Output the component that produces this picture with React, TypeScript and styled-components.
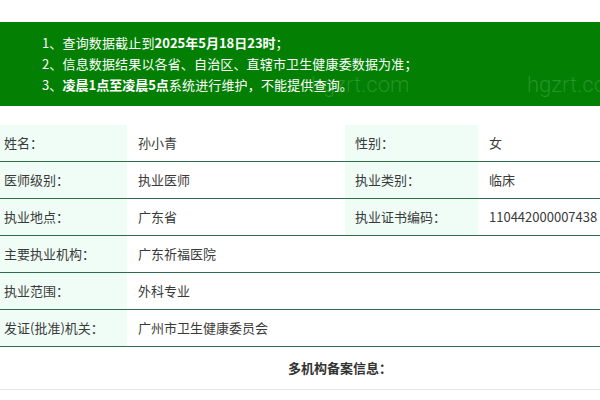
import React from "react";
import styled, { createGlobalStyle } from "styled-components";

const Global = createGlobalStyle`
  html, body { margin: 0; padding: 0; background: #fff; overflow: hidden; }
  body { font-family: "Noto Sans CJK SC", "Noto Sans", sans-serif; font-size: 13px; color: #333; }
`;

const Page = styled.div`
  position: relative;
  width: 600px;
  height: 400px;
  overflow: hidden;
  padding-top: 22px;
  box-sizing: border-box;
`;

const Banner = styled.div`
  position: relative;
  background: #038003;
  color: #fff;
  padding: 10px 0 10px 42px;
  height: 84px;
  box-sizing: border-box;
  overflow: hidden;
`;

const Notice = styled.p`
  margin: 0;
  line-height: 21px;
  font-size: 13px;
  letter-spacing: 0.15px;
  white-space: nowrap;
  position: relative;
  z-index: 1;
`;

const Strong = styled.b`
  font-weight: 700;
  letter-spacing: 0;
`;

const Watermark = styled.span<{ $x: number; $y: number }>`
  position: absolute;
  left: ${(p) => p.$x}px;
  top: ${(p) => p.$y}px;
  font-family: Roboto, "Noto Sans", sans-serif;
  font-weight: 300;
  font-size: 22px;
  line-height: 26px;
  color: rgba(255, 255, 255, 0.16);
  white-space: nowrap;
  pointer-events: none;
`;

const Table = styled.div`
  margin-top: 19px;
  display: grid;
  grid-template-columns: 127px 218px 133px 1fr;
`;

const Cell = styled.div<{ $label?: boolean; $span?: number; $first?: boolean }>`
  grid-column: span ${(p) => p.$span ?? 1};
  background: ${(p) => (p.$label ? "#effdf6" : "#fff")};
  height: 37px;
  line-height: 36px;
  padding-left: ${(p) => (p.$first ? 4 : p.$label ? 10 : 11)}px;
  border-bottom: 1px solid #2f6c4e;
  white-space: nowrap;
  color: #3a3a3a;
  box-sizing: border-box;
`;

const Footer = styled.div`
  height: 43px;
  line-height: 42px;
  padding-left: 80px;
  text-align: center;
  font-weight: 700;
  color: #333;
  border-bottom: 1px solid #e6e6e6;
  box-sizing: border-box;
`;

const rows: { label: string; value: string; label2?: string; value2?: string }[] = [
  { label: "姓名：", value: "孙小青", label2: "性别：", value2: "女" },
  { label: "医师级别：", value: "执业医师", label2: "执业类别：", value2: "临床" },
  { label: "执业地点：", value: "广东省", label2: "执业证书编码：", value2: "110442000007438" },
  { label: "主要执业机构：", value: "广东祈福医院" },
  { label: "执业范围：", value: "外科专业" },
  { label: "发证(批准)机关：", value: "广州市卫生健康委员会" },
];

export default function App() {
  return (
    <>
      <Global />
      <Page>
        <Banner>
          <Watermark $x={311} $y={50}>hgzrt.com</Watermark>
          <Watermark $x={527} $y={50}>hgzrt.com</Watermark>
          <Notice>
            1、查询数据截止到<Strong>2025年5月18日23时</Strong>；
          </Notice>
          <Notice>2、信息数据结果以各省、自治区、直辖市卫生健康委数据为准；</Notice>
          <Notice>
            3、<Strong>凌晨1点至凌晨5点</Strong>系统进行维护，不能提供查询。
          </Notice>
        </Banner>
        <Table>
          {rows.map((r) =>
            r.label2 ? (
              <React.Fragment key={r.label}>
                <Cell $label $first>{r.label}</Cell>
                <Cell>{r.value}</Cell>
                <Cell $label>{r.label2}</Cell>
                <Cell>{r.value2}</Cell>
              </React.Fragment>
            ) : (
              <React.Fragment key={r.label}>
                <Cell $label $first>{r.label}</Cell>
                <Cell $span={3}>{r.value}</Cell>
              </React.Fragment>
            )
          )}
        </Table>
        <Footer>多机构备案信息：</Footer>
      </Page>
    </>
  );
}
